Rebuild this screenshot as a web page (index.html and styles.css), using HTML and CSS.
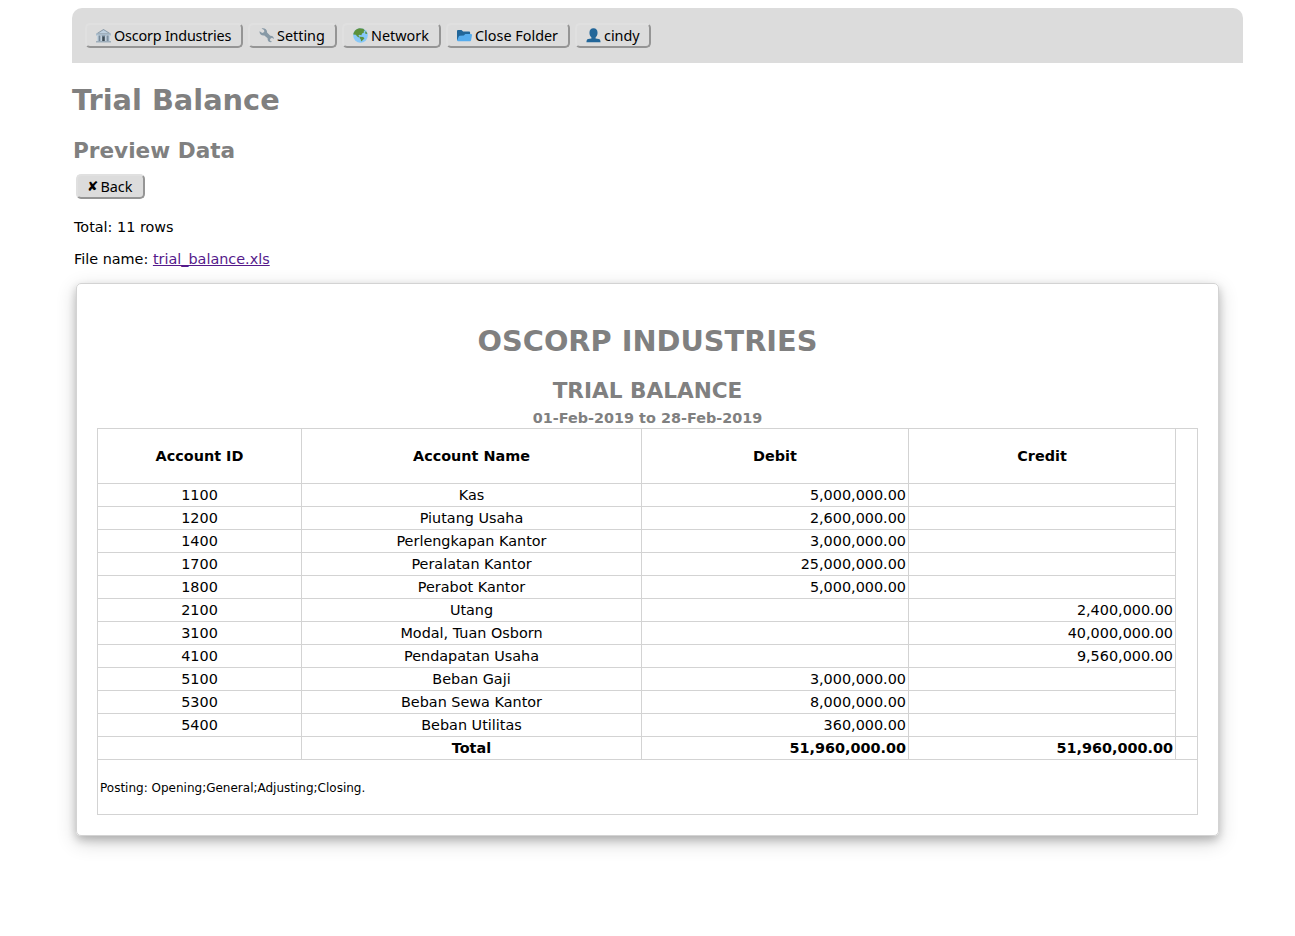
FILE: index.html
```
<!DOCTYPE html>
<html lang="en">
<head>
<meta charset="utf-8">
<title>Trial Balance</title>
<link rel="stylesheet" href="styles.css">
</head>
<body>
<nav class="toolbar">
  <button class="btn company"><svg class="icon" viewBox="0 0 16 16"><path fill="#8798a6" d="M8 1 16 6H0z"/><path fill="#bed0df" d="M8 2.2 13 5.2H3z"/><path fill="#a8bccc" d="M0 6h16v2H0z"/><path fill="#c2d2df" d="M1 8h14v6H1z"/><path fill="#687c8d" d="M2.8 8h1.3v6H2.8zM5 8h6v6H5zM12 8h1.3v6H12z"/><path fill="#cfdae3" d="M5.3 8h1v6h-1zM9.7 8h1v6h-1z"/><path fill="#3f4a52" d="M7 9.5h2V14H7z"/><path fill="#96a7b6" d="M0 14h16v1.4H0z"/></svg><span>Oscorp Industries</span></button>
  <button class="btn setting"><svg class="icon" viewBox="0 0 16 16"><path fill="#8799a6" d="M.6 3.4 3.5 5.3 5.6 4.3 5.4 2 2.7.4C5.8-.4 9 1.4 8.6 4.9L12 8.3c1.9-.3 3.7.8 4 3.3L13.7 10.4l-1.9 1.3.1 2 2.2 1.3c-3 .8-5.3-1.2-4.9-4L5.7 8C2.8 8.5.1 6.5.6 3.4z"/></svg><span>Setting</span></button>
  <button class="btn network"><svg class="icon" viewBox="0 0 16 16"><circle cx="8" cy="8" r="7.8" fill="#88c9f9"/><path fill="#5c913b" d="M.3 7C.7 3.2 3.6.6 7 .2L11 .8l1.6 1.8-1.2 1 .3 1.3-2 .9-.8 1.8-2.2-.4-1 1 1.2 1.1-.5.8-1.9-1.1-1.5-1.8zM7.2 9.3l3.6.2 1.4 1.3-1.6 2-1.9 1.6-.5-2.5-1.2-1.2zM12.8 3.8l1.5.2 1 2.2-1.9.2z"/></svg><span>Network</span></button>
  <button class="btn folder"><svg class="icon" viewBox="0 0 16 16"><path fill="#226699" d="M0 3.3C0 2.5.5 2 1.3 2h3.5l1.7 1.6h6.2c.8 0 1.3.5 1.3 1.3V13H0z"/><path fill="#55acee" d="M3 8.2l4.3-.1 1.5-1.6h6.1c.8 0 1.2.5 1.1 1.2L15 13c-.1.7-.6 1.2-1.3 1.2H1.1C.3 14.2 0 13.7.2 13L1.7 9.2c.2-.6.7-1 1.3-1z"/></svg><span>Close Folder</span></button>
  <button class="btn user"><svg class="icon" viewBox="0 0 16 16"><path fill="#226699" d="M8 .3c2.8 0 4.3 1.8 4.3 4.8 0 2.2-.8 4-2.1 5v1l3.5.7c1.2.2 1.8 1.3 1.8 3.4H.5c0-2.1.6-3.2 1.8-3.4l3.5-.7v-1c-1.3-1-2.1-2.8-2.1-5C3.7 2.1 5.2.3 8 .3z"/></svg><span>cindy</span></button>
</nav>
<main>
  <h1 class="title">Trial Balance</h1>
  <h2 class="subtitle">Preview Data</h2>
  <button class="btn back"><span class="cross">✘</span><span>Back</span></button>
  <p class="info">Total: 11 rows</p>
  <p class="info">File name: <a class="file" href="#">trial_balance.xls</a></p>
  <section class="sheet">
    <h1 class="company-name">OSCORP INDUSTRIES</h1>
    <h2 class="report-name">TRIAL BALANCE</h2>
    <h4 class="period">01-Feb-2019 to 28-Feb-2019</h4>
    <table class="report">
      <colgroup><col class="c-id"><col class="c-name"><col class="c-amount"><col class="c-amount"><col class="c-end"></colgroup>
      <tr class="head"><th>Account ID</th><th>Account Name</th><th>Debit</th><th>Credit</th><td rowspan="12"></td></tr>
      <tr><td>1100</td><td>Kas</td><td class="num">5,000,000.00</td><td></td></tr>
      <tr><td>1200</td><td>Piutang Usaha</td><td class="num">2,600,000.00</td><td></td></tr>
      <tr><td>1400</td><td>Perlengkapan Kantor</td><td class="num">3,000,000.00</td><td></td></tr>
      <tr><td>1700</td><td>Peralatan Kantor</td><td class="num">25,000,000.00</td><td></td></tr>
      <tr><td>1800</td><td>Perabot Kantor</td><td class="num">5,000,000.00</td><td></td></tr>
      <tr><td>2100</td><td>Utang</td><td></td><td class="num">2,400,000.00</td></tr>
      <tr><td>3100</td><td>Modal, Tuan Osborn</td><td></td><td class="num">40,000,000.00</td></tr>
      <tr><td>4100</td><td>Pendapatan Usaha</td><td></td><td class="num">9,560,000.00</td></tr>
      <tr><td>5100</td><td>Beban Gaji</td><td class="num">3,000,000.00</td><td></td></tr>
      <tr><td>5300</td><td>Beban Sewa Kantor</td><td class="num">8,000,000.00</td><td></td></tr>
      <tr><td>5400</td><td>Beban Utilitas</td><td class="num">360,000.00</td><td></td></tr>
      <tr><td></td><th>Total</th><th class="num">51,960,000.00</th><th class="num">51,960,000.00</th><td></td></tr>
      <tr class="foot"><td colspan="5">Posting: Opening;General;Adjusting;Closing.</td></tr>
    </table>
  </section>
</main>
</body>
</html>
```
FILE: styles.css
```
body {
  box-sizing: border-box;
  min-height: 936px;
  margin: 0;
  padding: 8px 52px 0 72px;
  background: #fff;
  color: #000;
  font: 14.4px "DejaVu Sans", sans-serif;
}
.toolbar {
  display: flex;
  gap: 5px;
  box-sizing: border-box;
  height: 55px;
  padding: 15px 13px;
  background: #dcdcdc;
  border-radius: 10px 10px 0 0;
}
.btn {
  display: flex;
  align-items: center;
  box-sizing: border-box;
  height: 25px;
  margin: 0;
  padding: 0 0 0 9px;
  border: 2px solid;
  border-color: #e0e0e0 #959595 #959595 #e0e0e0;
  border-radius: 5px;
  background: #dcdcdc;
  color: #000;
  font: 14.4px/21px "Noto Sans", sans-serif;
  white-space: nowrap;
}
.icon {
  width: 15px;
  height: 15px;
  margin-right: 3px;
  flex: none;
}
.company { width: 158px; letter-spacing: -.2px; }
.setting { width: 89px; }
.network { width: 99px; }
.folder { width: 124px; }
.user { width: 76px; }
.title, .subtitle, .company-name, .report-name, .period { color: #808080; }
.title {
  margin: 20px 0 0;
  font-size: 28.8px;
  line-height: 34px;
}
.subtitle {
  margin: 21px 0 0 1px;
  font-size: 21.6px;
  line-height: 26px;
}
.back {
  width: 69px;
  margin: 10px 0 0 4px;
}
.cross {
  margin: 0 2px 0 0;
  font-family: "DejaVu Sans", sans-serif;
  font-size: 13.6px;
}
.info {
  margin: 15px 0 0 2px;
  line-height: 17px;
}
.back + .info { margin-top: 20px; }
.file { color: #551a8b; }
.sheet {
  box-sizing: border-box;
  width: 1143px;
  height: 553px;
  margin: 15px 0 0 4px;
  padding: 40px 20px 20px;
  border: 1px solid #d3d3d3;
  border-radius: 5px;
  box-shadow: 0 4px 8px rgba(0, 0, 0, .2), 0 6px 20px rgba(0, 0, 0, .19);
  text-align: center;
}
.company-name {
  margin: 0;
  font-size: 28.8px;
  line-height: 34px;
}
.report-name {
  margin: 20px 0 0;
  font-size: 21.6px;
  line-height: 26px;
}
.period {
  margin: 6px 0 1px;
  font-size: 14.4px;
  line-height: 17px;
}
.report {
  width: 1101px;
  table-layout: fixed;
  border-collapse: collapse;
}
.c-id { width: 204px; }
.c-name { width: 340px; }
.c-amount { width: 267px; }
.c-end { width: 22px; }
.report td, .report th {
  height: 22px;
  padding: 0 2px;
  border: 1px solid #d3d3d3;
  line-height: 17px;
}
.report .head th { height: 54px; }
.report .num { text-align: right; }
.report .foot td {
  height: 52px;
  padding-top: 2px;
  font-size: 12px;
  text-align: left;
}
```
